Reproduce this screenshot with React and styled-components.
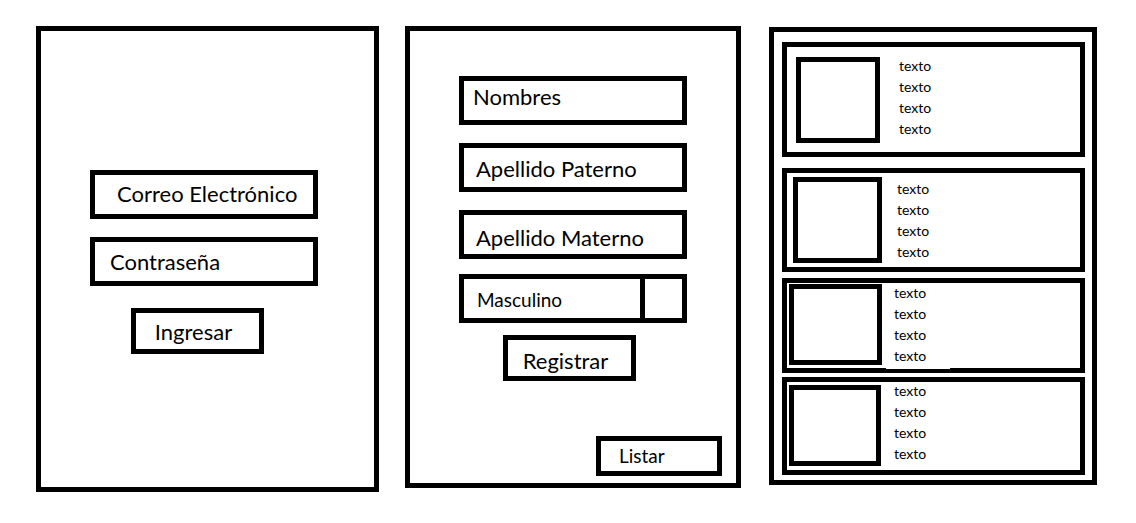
import React from "react";
import styled, { createGlobalStyle } from "styled-components";

const GlobalStyle = createGlobalStyle`
  *, *::before, *::after { box-sizing: border-box; }
  body {
    margin: 0;
    background: #fff;
    color: #000;
    font-family: Lato, "Open Sans", sans-serif;
  }
`;

const Board = styled.main`
  display: grid;
  grid-template-columns: 343fr 26px 336fr 28px 328fr;
  grid-template-areas: "login . register . list";
  align-items: start;
  padding: 26px 39px 31px 36px;
`;

const LoginScreen = styled.form`
  grid-area: login;
  display: flex;
  flex-direction: column;
  border: 5px solid #000;
  padding: 139px 56px 133px 49px;
`;

const RegisterScreen = styled.form`
  grid-area: register;
  display: flex;
  flex-direction: column;
  border: 5px solid #000;
  padding: 45px 0 7px;
`;

const ListScreen = styled.ul`
  grid-area: list;
  list-style: none;
  margin: 1px 0 0;
  border: 5px solid #000;
  padding: 10px 7px 5px 8px;
`;

const Fields = styled.div`
  display: flex;
  flex-direction: column;
  gap: 18px;
`;

const RegisterBody = styled.div`
  display: flex;
  flex-direction: column;
  padding: 0 49px;
`;

const Field = styled.input`
  width: 100%;
  height: 49px;
  margin: 0;
  border: 5px solid #000;
  border-radius: 0;
  background: #fff;
  padding: ${(p) => p.$top || 0}px 0 ${(p) => p.$bottom || 0}px ${(p) => p.$left}px;
  font: 22px/26px Lato, "Open Sans", sans-serif;
  color: #000;
  &::placeholder { color: #000; opacity: 1; }
`;

const Select = styled.select`
  appearance: none;
  width: 100%;
  height: 49px;
  margin: 15px 0 12px;
  border: 5px solid #000;
  border-radius: 0;
  background: linear-gradient(#000, #000) right 37px top 0 / 5px 100% no-repeat #fff;
  padding: 2px 42px 0 13px;
  font: 19px/26px Lato, "Open Sans", sans-serif;
  color: #000;
`;

const Button = styled.button`
  width: 133px;
  height: 46px;
  margin: ${(p) => p.$above || 0}px 0 0 ${(p) => p.$inset}px;
  border: 5px solid #000;
  background: #fff;
  padding: ${(p) => p.$top}px 8px 0 0;
  font: 22px/26px Lato, "Open Sans", sans-serif;
  color: #000;
`;

const ListButton = styled.button`
  align-self: flex-end;
  width: 126px;
  height: 40px;
  margin: 55px 14px 0 0;
  border: 5px solid #000;
  background: #fff;
  padding: 0 0 0 18px;
  font: 19px/26px Lato, "Open Sans", sans-serif;
  text-align: left;
  color: #000;
`;

const Card = styled.li`
  display: flex;
  border: 5px solid #000;
  height: ${(p) => p.$height}px;
  margin-top: ${(p) => p.$gap}px;
  padding-left: ${(p) => p.$left}px;
`;

const Thumb = styled.div`
  flex: none;
  width: ${(p) => p.$width}px;
  height: ${(p) => p.$height}px;
  margin-top: ${(p) => p.$top}px;
  border: 5px solid #000;
`;

const Lines = styled.div`
  display: flex;
  flex-direction: column;
  gap: 3px;
  width: 64px;
  margin: 0 0 ${(p) => (p.$overlap ? -1 : 0)}px 4px;
  padding: ${(p) => p.$top}px 0 0 ${(p) => p.$left}px;
  background: #fff;
  font-size: 14px;
  line-height: 18px;
`;

const cards = [
  { height: 115, gap: 0, left: 9, thumb: [84, 86, 10], text: [10, 15] },
  { height: 104, gap: 11, left: 6, thumb: [89, 86, 4], text: [7, 11] },
  { height: 95, gap: 6, left: 2, thumb: [93, 81, 1], text: [1, 8], overlap: true },
  { height: 98, gap: 4, left: 2, thumb: [92, 81, 3], text: [0, 9] },
];

const rows = ["texto", "texto", "texto", "texto"];

const stay = (e) => e.preventDefault();

export default function App() {
  return (
    <>
      <GlobalStyle />
      <Board>
        <LoginScreen onSubmit={stay}>
          <Fields>
            <Field type="email" aria-label="Correo Electrónico" placeholder="Correo Electrónico" $left={22} $bottom={2} />
            <Field type="password" aria-label="Contraseña" placeholder="Contraseña" $left={15} />
          </Fields>
          <Button type="submit" $above={22} $inset={41} $top={2}>Ingresar</Button>
        </LoginScreen>

        <RegisterScreen onSubmit={stay}>
          <RegisterBody>
            <Fields>
              <Field aria-label="Nombres" placeholder="Nombres" $left={9} $bottom={8} />
              <Field aria-label="Apellido Paterno" placeholder="Apellido Paterno" $left={12} $top={2} />
              <Field aria-label="Apellido Materno" placeholder="Apellido Materno" $left={12} $top={6} />
            </Fields>
            <Select aria-label="Sexo" defaultValue="Masculino">
              <option>Masculino</option>
            </Select>
            <Button type="submit" $inset={44} $top={6}>Registrar</Button>
          </RegisterBody>
          <ListButton type="button">Listar</ListButton>
        </RegisterScreen>

        <ListScreen>
          {cards.map((c, i) => (
            <Card key={i} $height={c.height} $gap={c.gap} $left={c.left}>
              <Thumb $width={c.thumb[0]} $height={c.thumb[1]} $top={c.thumb[2]} />
              <Lines $top={c.text[0]} $left={c.text[1]} $overlap={c.overlap}>
                {rows.map((t, j) => (
                  <span key={j}>{t}</span>
                ))}
              </Lines>
            </Card>
          ))}
        </ListScreen>
      </Board>
    </>
  );
}
